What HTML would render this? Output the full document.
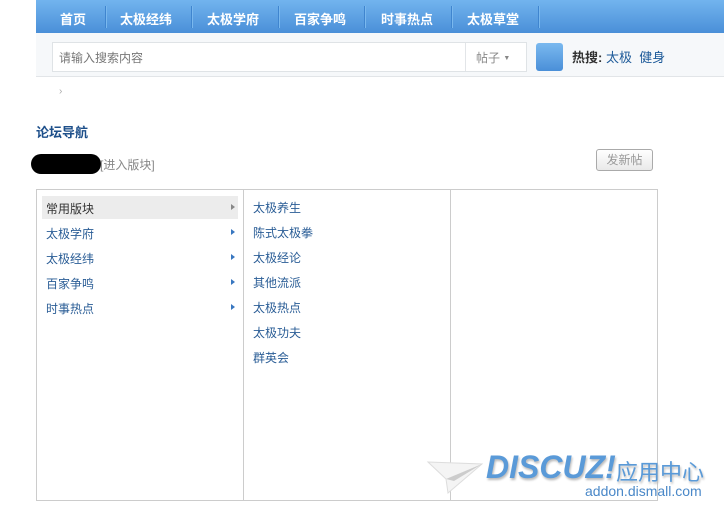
<!DOCTYPE html><html><head><meta charset="utf-8"><style>
body{margin:0;width:724px;height:518px;background:#fff;font-family:"Liberation Sans","Noto Sans CJK SC",sans-serif;font-size:12px;position:relative;overflow:hidden}
.a{position:absolute}
.nav{left:36px;top:0;width:688px;height:33px;background:linear-gradient(#72b4ee,#4a8fd8)}
.nav span{position:absolute;top:9px;color:#fff;font-weight:bold;font-size:13px}
.nav i{position:absolute;top:6px;width:1px;height:22px;background:#3f85cf;border-right:1px solid #7ab8ee}
.sb{left:36px;top:33px;width:688px;height:43px;background:#f6f8fa;border-bottom:1px solid #e2e5e8}
.blue{color:#1d5a99}
.m{color:#2a5d96}
.tri{position:absolute;width:0;height:0;border-left:4px solid #3877c0;border-top:3px solid transparent;border-bottom:3px solid transparent}
</style></head><body>
<div class="a nav">
<span style="left:24px">首页</span><i style="left:69px"></i>
<span style="left:84px">太极经纬</span><i style="left:155px"></i>
<span style="left:171px">太极学府</span><i style="left:242px"></i>
<span style="left:258px">百家争鸣</span><i style="left:328px"></i>
<span style="left:345px">时事热点</span><i style="left:415px"></i>
<span style="left:431px">太极草堂</span><i style="left:502px"></i>
</div>
<div class="a sb"></div>
<div class="a" style="left:52px;top:42px;width:473px;height:28px;border:1px solid #dfe3e6;background:#fff"></div>
<div class="a" style="left:465px;top:43px;width:1px;height:28px;background:#e2e5e8"></div>
<div class="a" style="left:59px;top:49px;color:#777;font-size:12px">请输入搜索内容</div>
<div class="a" style="left:476px;top:49px;color:#888">帖子 <span style="font-size:7px;vertical-align:2px">▼</span></div>
<div class="a" style="left:536px;top:43px;width:27px;height:28px;border-radius:3px;background:linear-gradient(#7ab9ef,#4a8fd8)"></div>
<div class="a" style="left:572px;top:47px;font-size:13px"><b style="color:#333">热搜:</b> <span class="blue">太极</span>&nbsp; <span class="blue">健身</span></div>
<div class="a" style="left:59px;top:86px;color:#aaa;font-size:10px">›</div>
<div class="a" style="left:36px;top:122px;color:#1d4f8a;font-weight:bold;font-size:13px">论坛导航</div>
<div class="a" style="left:31px;top:154px;width:70px;height:20px;background:#000;border-radius:10px"></div>
<div class="a" style="left:100px;top:156px;color:#888">[进入版块]</div>
<div class="a" style="left:596px;top:149px;width:55px;height:20px;border:1px solid #aaa;border-radius:3px;background:linear-gradient(#fff,#e9e9e9);color:#999;text-align:center;line-height:20px">发新帖</div>
<div class="a" style="left:36px;top:189px;width:620px;height:310px;border:1px solid #ccc"></div>
<div class="a" style="left:243px;top:190px;width:1px;height:310px;background:#ccc"></div>
<div class="a" style="left:450px;top:190px;width:1px;height:310px;background:#ccc"></div>
<div class="a" style="left:42px;top:196px;width:196px;height:23px;background:#ececec"></div>
<div class="a" style="left:46px;top:200px;color:#333">常用版块</div>
<div class="a m" style="left:46px;top:225px">太极学府</div>
<div class="a m" style="left:46px;top:250px">太极经纬</div>
<div class="a m" style="left:46px;top:275px">百家争鸣</div>
<div class="a m" style="left:46px;top:300px">时事热点</div>
<div class="tri" style="left:231px;top:204px;border-left-color:#888"></div>
<div class="tri" style="left:231px;top:229px"></div>
<div class="tri" style="left:231px;top:254px"></div>
<div class="tri" style="left:231px;top:279px"></div>
<div class="tri" style="left:231px;top:304px"></div>
<div class="a m" style="left:253px;top:196px;line-height:25px">太极养生<br>陈式太极拳<br>太极经论<br>其他流派<br>太极热点<br>太极功夫<br>群英会</div>
<svg class="a" style="left:426px;top:455px" width="60" height="45"><path d="M2 7 L56 9 L22 38 L20 24 Z" fill="#f4f4f4" stroke="#ddd"/><path d="M20 24 L56 9 L28 26 Z" fill="#ccc"/></svg>
<div class="a" style="left:486px;top:449px;color:#5a9ad8;font-weight:bold;font-style:italic;font-size:32px;letter-spacing:0px;text-shadow:1px 2px 2px #bbb">DISCUZ!</div>
<div class="a" style="left:616px;top:455px;color:#5a9ad8;font-size:22px;text-shadow:1px 2px 2px #bbb">应用中心</div>
<div class="a" style="left:585px;top:483px;color:#4a88c8;font-size:14px">addon.dismall.com</div>
</body></html>
